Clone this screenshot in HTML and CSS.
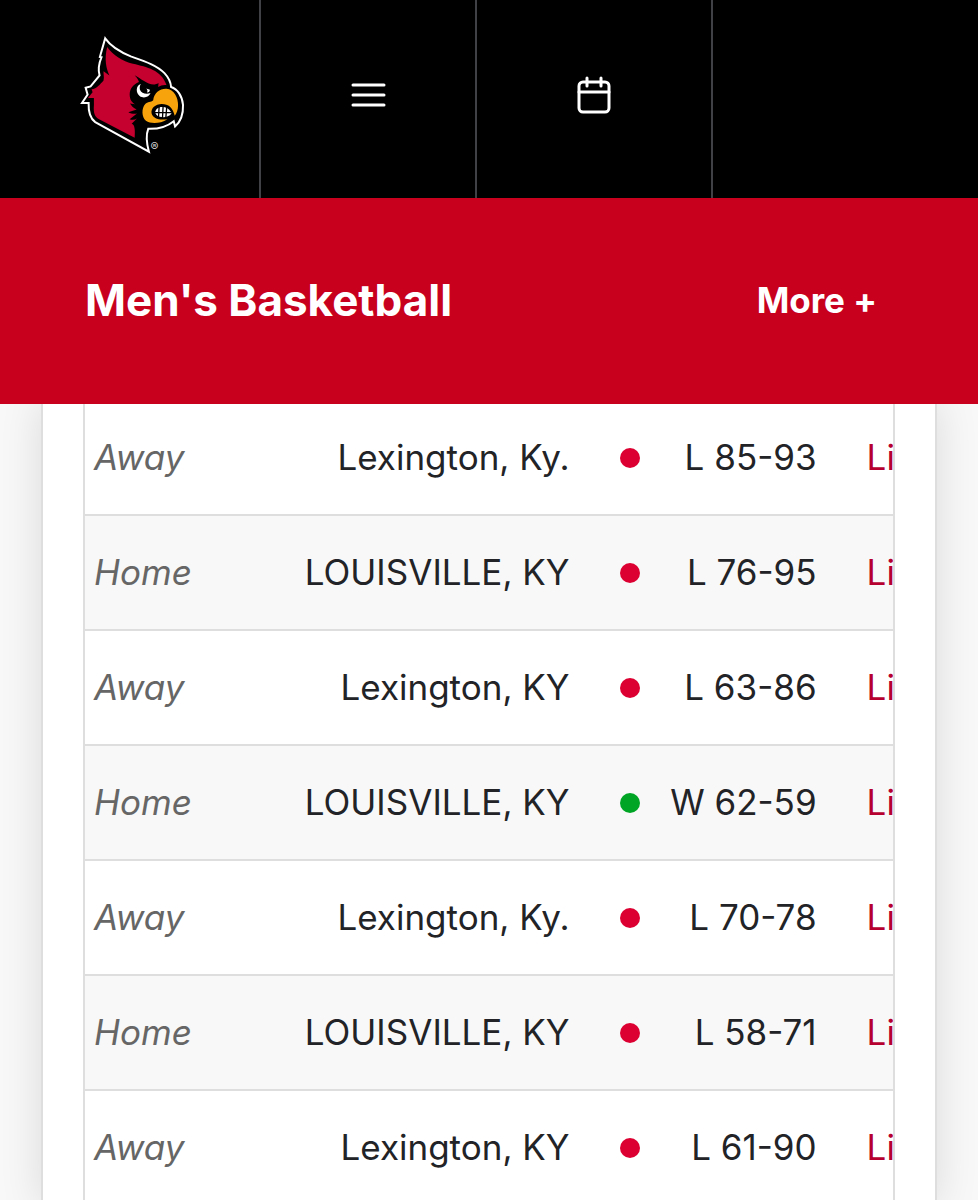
FILE: index.html
```
<!DOCTYPE html>
<html lang="en">

<head>
  <meta charset="UTF-8">
  <meta name="viewport" content="width=device-width, initial-scale=1.0">
  <title>Men's Basketball</title>
  <link rel="stylesheet" href="styles.css">
</head>

<body>
  <header class="topbar">
    <a class="topbar-item" href="#" aria-label="Louisville Cardinals">
      <svg class="logo" viewBox="30 30 320 360">
        <path fill="#000" stroke="#fff" stroke-width="6" stroke-linejoin="miter" d="M106 39 C120 59 150 80 185 94 C225 108 262 120 285 144 C298 158 304 172 305 186 C324 192 339 213 341 240 C342 268 334 290 317 305 L313 289 C296 303 270 313 236 312 C228 332 231 355 238 381 L76 292 C60 280 55 262 56 234 L36 234 L53 209 L47 188 L62 184 L89 151 C84 133 87 115 95 96 L90 95 Z"/>
        <path fill="#c4012f" d="M112 65 C130 90 158 108 190 116 C232 126 275 134 291 180 C281 179 273 181 266 186 L267 174 C253 183 238 177 222 167 C212 161 207 156 195 150 C203 158 207 165 208 171 C190 179 181 191 180 208 C180 224 186 232 196 238 L181 236 C186 244 191 250 201 254 L176 262 C184 266 193 268 202 266 L180 283 C188 286 195 285 202 281 L186 297 C195 299 197 315 195 339 L89 284 C74 276 70 264 72 240 L72 219 L54 219 L68 202 L65 193 C81 190 91 177 101 166 C104 154 100 148 101 138 L119 151 C109 130 103 103 112 65 Z"/>
        <path fill="#f7a30c" d="M251 226 C253 203 272 190 291 191 C314 193 327 218 326 242 C326 255 322 265 316 273 C310 248 297 237 277 237 C257 238 244 249 246 265 C250 281 269 287 294 283 C272 297 244 298 229 288 C216 277 215 250 227 237 C234 230 244 233 251 226 Z"/>
        <path fill="#fff" d="M214 177 C198 181 198 204 210 213 C222 222 239 216 243 204 C230 209 215 205 211 194 C209 187 211 181 214 177 Z"/>
        <path fill="#fff" d="M230 190 L241 194 C241 199 237 203 232 202 C235 198 234 194 230 190 Z"/>
        <path fill="#fff" d="M257 261 C260 247 274 244 286 247 C297 250 304 257 306 266 C299 276 284 279 271 276 C263 273 258 269 257 261 Z"/>
        <path fill="none" stroke="#000" stroke-width="4" d="M256 263 H306 M269 243 L267 278 M281 242 L279 280 M292 244 L289 280"/>
        <text class="logo-mark" x="255" y="380">®</text>
      </svg>
    </a>
    <button class="topbar-item" type="button" aria-label="Menu">
      <svg class="icon" viewBox="0 0 40 40">
        <path d="M5 10 H36 M5 20 H36 M5 30 H36"/>
      </svg>
    </button>
    <button class="topbar-item" type="button" aria-label="Calendar">
      <svg class="icon" viewBox="0 0 40 40">
        <rect x="5" y="7" width="30" height="30" rx="4"/>
        <path d="M5 17 H35 M13 3 V11 M27 3 V11"/>
      </svg>
    </button>
  </header>

  <div class="sport-bar">
    <h1>Men's Basketball</h1>
    <button class="more" type="button">More +</button>
  </div>

  <main>
    <div class="card">
      <div class="table-scroll">
        <table>
          <colgroup>
            <col class="col-site">
            <col>
            <col class="col-result">
            <col class="col-links">
          </colgroup>
          <tbody>
            <tr>
              <td class="site">Away</td>
              <td class="location">Lexington, Ky.</td>
              <td><div class="result loss">L 85-93</div></td>
              <td><a href="#">Li</a></td>
            </tr>
            <tr>
              <td class="site">Home</td>
              <td class="location">LOUISVILLE, KY</td>
              <td><div class="result loss">L 76-95</div></td>
              <td><a href="#">Li</a></td>
            </tr>
            <tr>
              <td class="site">Away</td>
              <td class="location">Lexington, KY</td>
              <td><div class="result loss">L 63-86</div></td>
              <td><a href="#">Li</a></td>
            </tr>
            <tr>
              <td class="site">Home</td>
              <td class="location">LOUISVILLE, KY</td>
              <td><div class="result win">W 62-59</div></td>
              <td><a href="#">Li</a></td>
            </tr>
            <tr>
              <td class="site">Away</td>
              <td class="location">Lexington, Ky.</td>
              <td><div class="result loss">L 70-78</div></td>
              <td><a href="#">Li</a></td>
            </tr>
            <tr>
              <td class="site">Home</td>
              <td class="location">LOUISVILLE, KY</td>
              <td><div class="result loss">L 58-71</div></td>
              <td><a href="#">Li</a></td>
            </tr>
            <tr>
              <td class="site">Away</td>
              <td class="location">Lexington, KY</td>
              <td><div class="result loss">L 61-90</div></td>
              <td><a href="#">Li</a></td>
            </tr>
          </tbody>
        </table>
      </div>
    </div>
  </main>
</body>

</html>
```
FILE: styles.css
```
* {
  box-sizing: border-box;
  margin: 0;
  padding: 0;
}

body {
  display: flex;
  flex-direction: column;
  height: 100vh;
  overflow: hidden;
  background: #f8f8f8;
  color: #222326;
  font-family: Inter, "Liberation Sans", sans-serif;
  font-size: 35px;
}

button {
  border: none;
  background: none;
  color: inherit;
  font: inherit;
  cursor: pointer;
}

/* top bar */
.topbar {
  display: grid;
  grid-template-columns: 261px 216px 236px 1fr;
  flex: none;
  height: 198px;
  background: #000;
}

.topbar-item {
  display: flex;
  align-items: center;
  justify-content: center;
  border-right: 2px solid #404047;
  padding-bottom: 8px;
}

.logo {
  width: 106px;
  height: 120px;
  margin-left: 6px;
}

.logo-mark {
  fill: #ccc;
  font-size: 36px;
  text-anchor: middle;
}

.icon {
  width: 40px;
  height: 40px;
  fill: none;
  stroke: #fff;
  stroke-width: 3;
  stroke-linecap: round;
}

/* red sport bar */
.sport-bar {
  display: flex;
  align-items: center;
  justify-content: space-between;
  flex: none;
  height: 206px;
  padding: 0 101px 2px 85px;
  background: #c8001e;
  color: #fff;
}

.sport-bar h1 {
  font-size: 44px;
  font-weight: 700;
}

.more {
  font-weight: 700;
}

/* schedule */
main {
  flex: 1;
  min-height: 0;
  overflow: hidden;
}

.card {
  margin: -3px 41px 0;
  padding: 0 40px;
  border: solid #dedede;
  border-width: 0 2px;
  background: #fff;
  box-shadow: 0 0 40px rgba(0, 0, 0, 0.12);
}

.table-scroll {
  overflow: hidden;
  border: solid #dedede;
  border-width: 0 2px;
}

table {
  width: 120%;
  table-layout: fixed;
  border-spacing: 0;
}

.col-site {
  width: 140px;
}

.col-result {
  width: 247px;
}

.col-links {
  width: 212px;
}

td {
  height: 115px;
  padding: 0 26px 2px 24px;
  border-bottom: 2px solid #dedede;
  white-space: nowrap;
}

tr:nth-child(even) {
  background: #f8f8f8;
}

.site {
  padding-left: 9px;
  color: #666;
  font-style: italic;
}

.location {
  text-align: right;
}

.result {
  display: flex;
  align-items: center;
  justify-content: space-between;
}

.result::before {
  content: "";
  width: 20px;
  height: 20px;
  margin-top: 2px;
  border-radius: 50%;
}

.loss::before {
  background: #dc0032;
}

.win::before {
  background: #00a526;
}

a {
  color: #b50030;
  text-decoration: none;
}
```
